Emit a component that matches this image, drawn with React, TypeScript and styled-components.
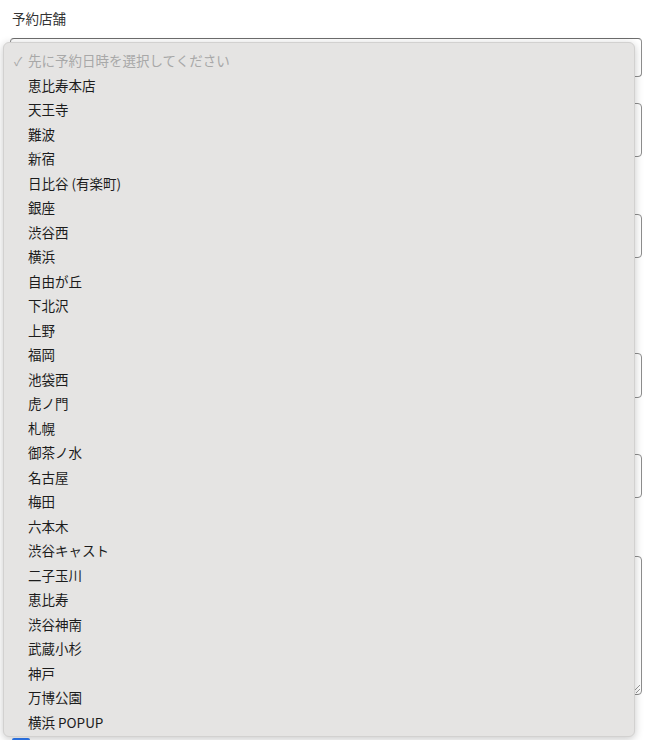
import React from 'react';
import styled, { createGlobalStyle } from 'styled-components';

const GlobalStyle = createGlobalStyle`
  html, body {
    margin: 0;
    padding: 0;
    background: #ffffff;
    font-family: "Noto Sans CJK JP", "Noto Sans", sans-serif;
    color: #333;
  }
`;

const Page = styled.div`
  position: relative;
  width: 645px;
  height: 740px;
  overflow: hidden;
  box-sizing: border-box;
  padding: 8px 3px 0 10px;
`;

const Label = styled.div`
  font-size: 13.5px;
  line-height: 20px;
  padding-left: 2px;
  color: #333;
`;

const Field = styled.div<{ $top: number }>`
  display: flex;
  flex-direction: column;
  gap: 10px;
  margin-top: ${(p) => p.$top}px;
`;

const Box = styled.div<{ $h: number }>`
  position: relative;
  height: ${(p) => p.$h}px;
  border: 1px solid #8e8e8e;
  border-radius: 4px;
  box-sizing: border-box;
  background: #fff;
`;

const SelectBox = styled(Box)`
  border-top-color: #6d6d6d;
`;

const Chevron = styled.span`
  position: absolute;
  right: 4px;
  top: 14px;
  font-size: 9px;
  color: #b0b0b0;
`;

const Grip = styled.span`
  position: absolute;
  right: 1px;
  bottom: 1px;
  width: 8px;
  height: 8px;
  background: linear-gradient(135deg, transparent 45%, #9a9a9a 45%, #9a9a9a 55%, transparent 55%, transparent 70%, #9a9a9a 70%, #9a9a9a 80%, transparent 80%);
`;

const BlueTab = styled.div`
  margin-top: 43px;
  margin-left: 2px;
  width: 18px;
  height: 8px;
  background: #2f7bf5;
  border-radius: 2px;
`;

const Menu = styled.ul`
  position: absolute;
  left: 3px;
  top: 42px;
  width: 632px;
  height: 695px;
  margin: 0;
  padding: 5px 0 0;
  list-style: none;
  box-sizing: border-box;
  background: #e5e4e3;
  border: 1px solid #d2d1d0;
  border-radius: 6px;
  box-shadow: 0 2px 8px rgba(0, 0, 0, 0.22);
`;

const Item = styled.li<{ $muted?: boolean }>`
  display: flex;
  align-items: center;
  height: 24.5px;
  padding-left: 24px;
  font-size: 13.5px;
  color: ${(p) => (p.$muted ? '#a8a8a8' : '#1c1c1c')};
  position: relative;
`;

const Check = styled.span`
  position: absolute;
  left: 10px;
  font-size: 12px;
  color: #a8a8a8;
`;

const stores = [
  '恵比寿本店', '天王寺', '難波', '新宿', '日比谷 (有楽町)', '銀座', '渋谷西', '横浜',
  '自由が丘', '下北沢', '上野', '福岡', '池袋西', '虎ノ門', '札幌', '御茶ノ水', '名古屋',
  '梅田', '六本木', '渋谷キャスト', '二子玉川', '恵比寿', '渋谷神南', '武蔵小杉', '神戸',
  '万博公園', '横浜 POPUP',
];

const App: React.FC = () => {
  return (
    <>
      <GlobalStyle />
      <Page>
        <Field $top={0}>
          <Label>予約店舗</Label>
          <SelectBox $h={39}>
            <Chevron>⌄</Chevron>
          </SelectBox>
        </Field>
        <Field $top={26}>
          <Box $h={54} />
        </Field>
        <Field $top={57}>
          <Box $h={44} />
        </Field>
        <Field $top={95}>
          <Box $h={45} />
        </Field>
        <Field $top={56}>
          <Box $h={44} />
        </Field>
        <Field $top={58}>
          <Box $h={139}>
            <Grip />
          </Box>
        </Field>
        <BlueTab />
        <Menu>
          <Item $muted>
            <Check>✓</Check>先に予約日時を選択してください
          </Item>
          {stores.map((s) => (
            <Item key={s}>{s}</Item>
          ))}
        </Menu>
      </Page>
    </>
  );
};

export default App;
